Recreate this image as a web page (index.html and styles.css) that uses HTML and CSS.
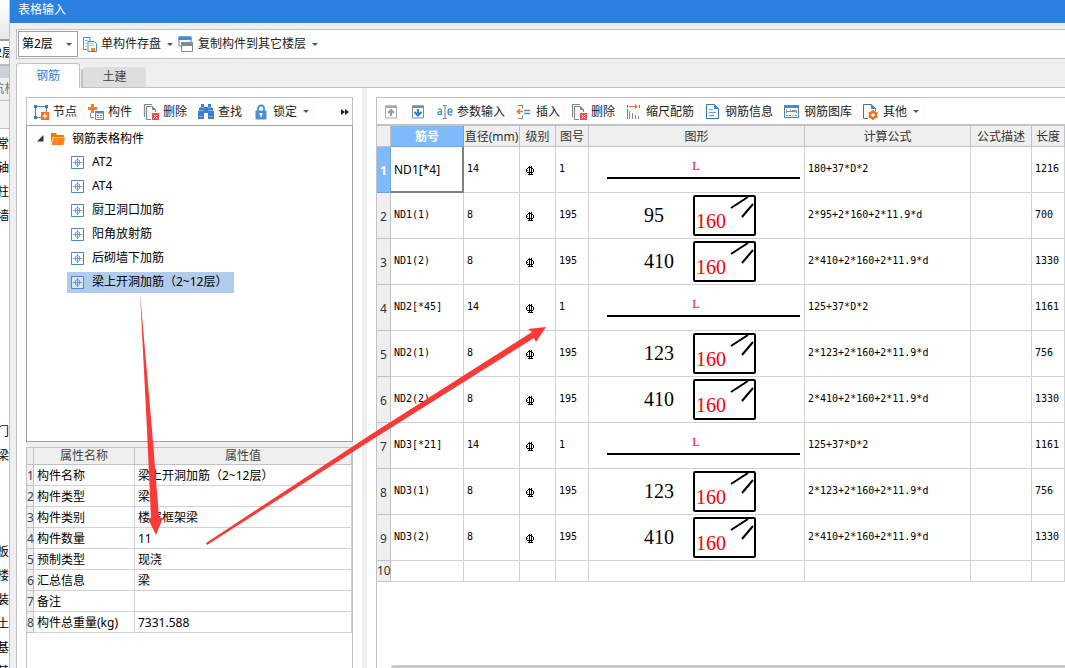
FILE: index.html
```html
<!DOCTYPE html>
<html lang="zh-CN">
<head>
<meta charset="utf-8">
<title>表格输入</title>
<link rel="stylesheet" href="styles.css">
</head>
<body>
<svg class="defs" aria-hidden="true">
  <symbol id="i-rebar" viewBox="0 0 10 11"><path d="M3 2.500h4M2 7.500h6M1.500 4v3M8.500 4v3M2 3.500h1M7 3.500h1M4.500 1v9M6.500 1v9M3 9.500h5M1.500 5.500h1" fill="none" stroke="#000" stroke-width="1"/></symbol>
  <symbol id="i-hooks" viewBox="0 0 59 37"><path d="M36 11L53 0M47 20L58 7" fill="none" stroke="#000" stroke-width="2"/></symbol>
  <symbol id="i-part" viewBox="0 0 13 13"><path d="M.5.5h12v12H.5z" fill="#fff" fill-opacity=".5" stroke="#3f8bdc"/><path d="M6.500 2v9M2 6.500h9M4.500 4.500l2-1 2 1M4.500 8.500l2 1 2-1M4.500 4.500v4M8.500 4.500v4" fill="none" stroke="#3f8bdc" stroke-width=".8"/></symbol>
  <symbol id="i-del" viewBox="0 0 16 16"><path d="M1.500 13V.5H9M3.500 15.500v-13H9l3.500 3.500v2M3.500 15.500H8" fill="none" stroke="#7d8b95" stroke-width="1.200"/><path d="M9 2v4h4z" fill="#7d8b95"/><path d="M9 9h7v7H9z" fill="#d9534f"/><path d="M10.500 10.500l4 4M14.500 10.500l-4 4" stroke="#fff"/></symbol>
</svg>

<aside class="strip">
  <div class="strip-top"></div>
  <div class="strip-field">2层</div>
  <div class="strip-bar"></div>
  <div class="strip-tab">杭构</div>
  <div class="strip-gap"></div>
  <ul class="strip-list">
    <li>常</li><li>轴</li><li>柱</li><li>墙</li>
    <li class="group-a">门</li><li>梁</li>
    <li class="group-b">板</li><li>楼</li><li>装</li><li>土</li><li>基</li><li>其</li>
  </ul>
</aside>

<main class="window">
  <header class="title">表格输入</header>

  <div class="topbar">
    <label class="floor"><select aria-label="楼层"><option>第2层</option></select><span class="caret"></span></label>
    <button class="topbtn">
      <svg width="14" height="15" viewBox="0 0 14 15"><path d="M4 12.500H.5V.5H7V4" fill="none" stroke="#3f8bdc"/><path d="M2.500 3.500h2M2.500 6.500h1M2.500 9.500h1" stroke="#3f8bdc"/><path d="M5 4.500h6l2.500 2v8H5z" fill="#fff" stroke="#3f8bdc"/><path d="M7 6.500h4M7 8.500h4" stroke="#9fc6ef"/><path d="M8 11h4v3H8z" fill="#f08a3c"/></svg>
      单构件存盘<span class="caret"></span>
    </button>
    <button class="topbtn">
      <svg width="16" height="16" viewBox="0 0 16 16"><path d="M1 1h12v9H1z" fill="#fff" stroke="#3f8bdc"/><path d="M.5.5h13V4H.5z" fill="#3f8bdc"/><path d="M3.500 6.500h11v9h-11z" fill="#fff" stroke="#7d8b95"/><path d="M3 6h12v4H3z" fill="#7d8b95"/></svg>
      复制构件到其它楼层<span class="caret"></span>
    </button>
  </div>

  <nav class="tabs">
    <button class="tab active">钢筋</button>
    <button class="tab">土建</button>
    <span class="tabline"></span>
  </nav>

  <div class="pane">
    <section class="left">
      <div class="tools">
        <button class="tool"><svg width="16" height="16" viewBox="0 0 16 16"><path d="M2.500 2.500h11v11h-11z" fill="none" stroke="#4a86b8"/><path d="M1 1h3v3H1zM12 1h3v3h-3zM1 12h3v3H1z" fill="#3479c8"/><path d="M8 8h8v8H8z" fill="#ee7420"/><path d="M12 9.500v5M9.500 12h5" stroke="#fff" stroke-width="1.200"/></svg>节点</button>
        <button class="tool"><svg width="16" height="16" viewBox="0 0 16 16"><path d="M3 0h3v3h3v3H6v3H3V6H0V3h3z" fill="#f08030"/><path d="M2.500 9v4.500H6" fill="none" stroke="#7d8b95"/><path d="M7.500 7.500h8v8h-8z" fill="#fff" stroke="#3f8bdc"/><path d="M7 7h9v2.500H7z" fill="#3f8bdc"/><path d="M9 11.500h2M12 11.500h2M9 13.500h2M12 13.500h2" stroke="#3f8bdc"/></svg>构件</button>
        <button class="tool"><svg width="16" height="16"><use href="#i-del"/></svg>删除</button>
        <button class="tool"><svg width="16" height="16" viewBox="0 0 16 16"><path d="M3 0h3v3h4V0h3v3l2 1v3h1v8h-6V9H6v6H0V7h1V4l2-1z" fill="#3a7fc8"/><path d="M1 6.500h5M10 6.500h5M1 12.500h4M11 12.500h4M3 3.500h3M10 3.500h3" stroke="#8fc0f0" stroke-width=".8"/></svg>查找</button>
        <button class="tool"><svg width="16" height="16" viewBox="0 0 16 16"><path d="M5 8V4.500a3 3 0 0 1 6 0V8" fill="none" stroke="#4a90d9" stroke-width="1.800"/><rect x="2.500" y="6.500" width="11" height="9" rx="1" fill="#4a90d9"/><path d="M8 9v4M6.500 10h3" stroke="#fff" stroke-width="1.500"/></svg>锁定<span class="caret"></span></button>
        <button class="more" aria-label="更多"><svg width="8" height="6" viewBox="0 0 8 6"><path d="M0 0l4 3-4 3zM4 0l4 3-4 3z" fill="#222"/></svg></button>
      </div>
      <div class="tree">
        <div class="root">
          <svg width="7" height="7" viewBox="0 0 7 7"><path d="M6.500 0v6.500H0z" fill="#333"/></svg>
          <svg width="14" height="12" viewBox="0 0 14 12"><path d="M0 11V0h5l1 2h7v2H2z" fill="#f47a00"/><path d="M2.500 4.500H14L12.500 12H.5z" fill="#ff8410"/></svg>
          钢筋表格构件
        </div>
        <ul>
          <li><span class="node"><svg width="13" height="13"><use href="#i-part"/></svg>AT2</span></li>
          <li><span class="node"><svg width="13" height="13"><use href="#i-part"/></svg>AT4</span></li>
          <li><span class="node"><svg width="13" height="13"><use href="#i-part"/></svg>厨卫洞口加筋</span></li>
          <li><span class="node"><svg width="13" height="13"><use href="#i-part"/></svg>阳角放射筋</span></li>
          <li><span class="node"><svg width="13" height="13"><use href="#i-part"/></svg>后砌墙下加筋</span></li>
          <li><span class="node selected"><svg width="13" height="13"><use href="#i-part"/></svg>梁上开洞加筋（2~12层）</span></li>
        </ul>
      </div>
      <div class="divider"></div>
      <div class="props">
        <table>
          <colgroup><col class="p-num"><col class="p-name"><col></colgroup>
          <thead><tr><th></th><th>属性名称</th><th>属性值</th></tr></thead>
          <tbody>
            <tr><th>1</th><td>构件名称</td><td>梁上开洞加筋（2~12层）</td></tr>
            <tr><th>2</th><td>构件类型</td><td>梁</td></tr>
            <tr><th>3</th><td>构件类别</td><td>楼层框架梁</td></tr>
            <tr><th>4</th><td>构件数量</td><td>11</td></tr>
            <tr><th>5</th><td>预制类型</td><td>现浇</td></tr>
            <tr><th>6</th><td>汇总信息</td><td>梁</td></tr>
            <tr><th>7</th><td>备注</td><td></td></tr>
            <tr><th>8</th><td>构件总重量(kg)</td><td>7331.588</td></tr>
          </tbody>
        </table>
      </div>
    </section>

    <div class="splitter"></div>

    <section class="right">
      <div class="tools">
        <button class="tool" aria-label="上移"><svg width="16" height="16" viewBox="0 0 16 16"><path d="M2.500 2h11v12h-11z" fill="#fff" stroke="#a8a8a8"/><path d="M2 1.500h12V4H2z" fill="#a8a8a8"/><path d="M8 12V6M5 9l3-3 3 3" fill="none" stroke="#999" stroke-width="2"/></svg></button>
        <button class="tool" aria-label="下移"><svg width="16" height="16" viewBox="0 0 16 16"><path d="M2.500 2h11v12h-11z" fill="#fff" stroke="#7d8b95"/><path d="M2 1.500h12V4H2z" fill="#7d8b95"/><path d="M8 5v6M4.500 8L8 11.500 11.500 8" fill="none" stroke="#2f7fd6" stroke-width="2.200"/></svg></button>
        <button class="tool"><svg width="16" height="16" viewBox="0 0 16 16"><path d="M1 5.500q3-1.500 3.500 1V11M4.500 7.500Q.5 7.500.8 9.500 1.500 11.500 4.500 9.500M11 8h4q0-3-2-3t-2 3 2 3q1.500 0 2-1" fill="none" stroke="#4a90d9" stroke-width="1.300"/><path d="M6 1.500h1.500l.5.500.5-.5H10M8 2v12M6 14.500h1.500l.5-.5.5.5H10" fill="none" stroke="#777"/></svg>参数输入</button>
        <button class="tool"><svg width="16" height="16" viewBox="0 0 16 16"><path d="M2 1.500h4.500v3M6.500 11v3.500H2" fill="none" stroke="#7d8b95"/><path d="M7 7.500H2M4 5L1.500 7.500 4 10" fill="none" stroke="#f07820" stroke-width="1.600"/><path d="M8 6.500h6M8 9.500h6" stroke="#4a90d9" stroke-width="1.300"/></svg>插入</button>
        <button class="tool"><svg width="16" height="16"><use href="#i-del"/></svg>删除</button>
        <button class="tool"><svg width="16" height="16" viewBox="0 0 16 16"><path d="M1.500 1v3M1.500 5v10" stroke="#3f8bdc"/><path d="M3 2.500h8" stroke="#f07820"/><path d="M9 0l3 2.500L9 5z" fill="#f07820"/><path d="M13.500 1v3" stroke="#3f8bdc"/><path d="M3.500 7v8M6.500 9v6M9.500 11v4M12.500 12v3" stroke="#7d8b95"/></svg>缩尺配筋</button>
        <button class="tool"><svg width="16" height="16" viewBox="0 0 16 16"><path d="M1.500.5h8l4 4v10h-12z" fill="#fff" stroke="#3479c8"/><path d="M9 0l5 5H9z" fill="#3f8bdc"/><path d="M4 5.500h4M4 8.500h7M4 11.500h5" stroke="#6b9ccc"/></svg>钢筋信息</button>
        <button class="tool"><svg width="16" height="16" viewBox="0 0 16 16"><path d="M.5 2.500h14v11H.5z" fill="#fff" stroke="#4a80b0"/><path d="M0 1h15v3H0z" fill="#3f8bdc"/><path d="M2.500 5.500v3.500M2.500 7.500h9M6.500 5.500v2M12.500 9V6.500H8" fill="none" stroke="#7d8b95"/><path d="M2 11.500h2" stroke="#7d8b95"/><path d="M5 11.500h2" stroke="#f07820"/><path d="M8 11.500h2" stroke="#e8b040"/><path d="M11 11.500h2" stroke="#50b060"/></svg>钢筋图库</button>
        <button class="tool"><svg width="16" height="16" viewBox="0 0 16 16"><path d="M5 14.500H.5V.5h8l4 4V7" fill="#fff" stroke="#3479c8"/><path d="M8 0l5 5H8z" fill="#3f8bdc"/><circle cx="10" cy="11" r="3" fill="#fff" stroke="#ee7420" stroke-width="2.400"/><path d="M10 6v2M10 14v2M5.500 8.500l2 1M14.500 8.500l-2 1M5.500 13.500l2-1M14.500 13.500l-2-1" stroke="#ee7420" stroke-width="1.600"/></svg>其他<span class="caret"></span></button>
      </div>
      <div class="grid">
        <table>
          <colgroup><col class="c-num"><col class="c-id"><col class="c-dia"><col class="c-grade"><col class="c-fig"><col class="c-shape"><col class="c-formula"><col class="c-desc"><col></colgroup>
          <thead><tr><th></th><th class="on">筋号</th><th>直径(mm)</th><th>级别</th><th>图号</th><th>图形</th><th>计算公式</th><th>公式描述</th><th>长度</th></tr></thead>
          <tbody>
            <tr><th class="on">1</th><td class="editing"><input aria-label="筋号" value="ND1[*4]"></td><td>14</td><td><svg class="rebar"><use href="#i-rebar"/></svg></td><td>1</td><td><div class="bar">L</div></td><td>180+37*D*2</td><td></td><td>1216</td></tr>
            <tr><th>2</th><td>ND1(1)</td><td>8</td><td><svg class="rebar"><use href="#i-rebar"/></svg></td><td>195</td><td><div class="hoop"><span>95</span><b>160<svg><use href="#i-hooks"/></svg></b></div></td><td>2*95+2*160+2*11.9*d</td><td></td><td>700</td></tr>
            <tr><th>3</th><td>ND1(2)</td><td>8</td><td><svg class="rebar"><use href="#i-rebar"/></svg></td><td>195</td><td><div class="hoop"><span>410</span><b>160<svg><use href="#i-hooks"/></svg></b></div></td><td>2*410+2*160+2*11.9*d</td><td></td><td>1330</td></tr>
            <tr><th>4</th><td>ND2[*45]</td><td>14</td><td><svg class="rebar"><use href="#i-rebar"/></svg></td><td>1</td><td><div class="bar">L</div></td><td>125+37*D*2</td><td></td><td>1161</td></tr>
            <tr><th>5</th><td>ND2(1)</td><td>8</td><td><svg class="rebar"><use href="#i-rebar"/></svg></td><td>195</td><td><div class="hoop"><span>123</span><b>160<svg><use href="#i-hooks"/></svg></b></div></td><td>2*123+2*160+2*11.9*d</td><td></td><td>756</td></tr>
            <tr><th>6</th><td>ND2(2)</td><td>8</td><td><svg class="rebar"><use href="#i-rebar"/></svg></td><td>195</td><td><div class="hoop"><span>410</span><b>160<svg><use href="#i-hooks"/></svg></b></div></td><td>2*410+2*160+2*11.9*d</td><td></td><td>1330</td></tr>
            <tr><th>7</th><td>ND3[*21]</td><td>14</td><td><svg class="rebar"><use href="#i-rebar"/></svg></td><td>1</td><td><div class="bar">L</div></td><td>125+37*D*2</td><td></td><td>1161</td></tr>
            <tr><th>8</th><td>ND3(1)</td><td>8</td><td><svg class="rebar"><use href="#i-rebar"/></svg></td><td>195</td><td><div class="hoop"><span>123</span><b>160<svg><use href="#i-hooks"/></svg></b></div></td><td>2*123+2*160+2*11.9*d</td><td></td><td>756</td></tr>
            <tr><th>9</th><td>ND3(2)</td><td>8</td><td><svg class="rebar"><use href="#i-rebar"/></svg></td><td>195</td><td><div class="hoop"><span>410</span><b>160<svg><use href="#i-hooks"/></svg></b></div></td><td>2*410+2*160+2*11.9*d</td><td></td><td>1330</td></tr>
            <tr class="blank"><th>10</th><td></td><td></td><td></td><td></td><td></td><td></td><td></td><td></td></tr>
          </tbody>
        </table>
        <div class="scrollbar"></div>
      </div>
    </section>
  </div>
</main>

<svg class="notes" width="1065" height="668" viewBox="0 0 1065 668" aria-hidden="true">
  <path d="M140 293L152 430 159 517 163 518 156 535 148 519 151 518 147 430zM206 543L370 435 532 332 528 329 546 327 536 342 534 338 370 441 207 545z" fill="#fa3a38"/>
</svg>
</body>
</html>
```

FILE: styles.css
```css
* { box-sizing: border-box; }

body {
  margin: 0;
  height: 100vh;
  display: flex;
  overflow: hidden;
  background: #efefef;
  color: #000;
  font: 12px/16px "Noto Sans", "Noto Sans CJK SC", sans-serif;
}

button, select, input { font: inherit; color: inherit; }
button { border: 0; background: none; padding: 0; }
ul { list-style: none; margin: 0; padding: 0; }
svg { flex: none; }
.defs { position: absolute; width: 0; height: 0; }

/* Slice of the window behind */
.strip {
  width: 9px;
  flex: none;
  overflow: hidden;
  background: #fff;
  display: flex;
  flex-direction: column;
}
.strip > div, .strip li {
  display: flex;
  align-items: center;
  justify-content: flex-end;
  flex: none;
  white-space: nowrap;
}
.strip-top { height: 41px; background: linear-gradient(#fff, #e4e9ec); border-bottom: 2px solid #9a9fa5; }
.strip > .strip-field { height: 25px; border-bottom: 2px solid #b8bcc2; justify-content: center; }
.strip-bar { height: 12px; background: #cfd1d8; }
.strip > .strip-tab { height: 23px; background: #efefef; color: #777; border-bottom: 1px solid #bfc1c5; justify-content: center; }
.strip-gap { height: 28px; background: #f2f2f2; border-bottom: 1px solid #bfc1c5; }
.strip-list { padding-top: 3px; }
.strip-list li { height: 24px; }
.strip-list .group-a { margin-top: 192px; }
.strip-list .group-b { margin-top: 72px; }

.window {
  flex: 1;
  min-width: 0;
  display: flex;
  flex-direction: column;
  border-left: 1px solid #b9c3d0;
}
.title {
  height: 23px;
  padding: 2px 8px;
  background: #2b80e2;
  color: #fff;
  flex: none;
}

.caret {
  border: 3px solid transparent;
  border-top-color: #555;
  border-bottom: 0;
}

.topbar {
  height: 30px;
  margin: 6px 0 4px 6px;
  padding-left: 1px;
  display: flex;
  align-items: center;
  gap: 5px;
  background: #fff;
  border: 1px solid #c0c2c7;
  border-right: 0;
  flex: none;
}
.floor { display: flex; align-items: center; position: relative; }
.floor select {
  width: 60px;
  height: 26px;
  appearance: none;
  border: 1px solid #a0a0a0;
  border-radius: 0;
  background: #fff;
  padding: 0 3px;
}
.floor .caret { position: absolute; right: 6px; }
.topbtn { display: flex; align-items: center; gap: 4px; color: #222; }
.topbtn .caret { margin-left: 2px; }

.tabs { display: flex; align-items: flex-end; height: 25px; margin-left: 6px; flex: none; }
.tab {
  width: 63px;
  height: 21px;
  margin-left: 3px;
  background: #dedede;
  border-radius: 3px 3px 0 0;
  color: #444;
}
.tab.active {
  width: 64px;
  height: 25px;
  margin: 0;
  background: #fff;
  color: #2b80e2;
  border: 1px solid #c0c2c7;
  border-bottom: 0;
}
.tab:not(.active) { border-bottom: 1px solid #c0c2c7; }
.tabline { flex: 1; border-bottom: 1px solid #c0c2c7; }
.tab.active + .tab { box-shadow: -3px 1px 0 -1px #c0c2c7; clip-path: inset(0 0 0 -3px); }

.pane {
  flex: 1;
  min-height: 0;
  margin-left: 6px;
  padding-left: 9px;
  display: flex;
  background: #fff;
  border-left: 1px solid #c0c2c7;
}
.left { width: 327px; padding-top: 9px; flex: none; display: flex; flex-direction: column; }
.splitter { width: 5px; margin: 0 9px; background: #efefef; flex: none; }
.right { flex: 1; min-width: 0; padding-top: 9px; display: flex; flex-direction: column; }

.tools {
  height: 28px;
  padding: 0 2px;
  display: flex;
  align-items: center;
  gap: 3px;
  border: 1px solid #c0c2c7;
  border-bottom: 0;
  flex: none;
  overflow: hidden;
}
.left .more { margin-right: 1px; }
.right .tools { height: 29px; padding-top: 1px; border-right: 0; border-bottom: 2px solid #c0c4c8; }
.tool {
  display: flex;
  align-items: center;
  gap: 4px;
  padding: 3px 4px;
  color: #222;
  white-space: nowrap;
  box-shadow: 0 0 0 1px #fafafa;
}
.tool .caret { margin-left: 2px; }
.more { margin-left: auto; display: flex; }

.tree { height: 317px; border: 1px solid #a2a2a2; padding-top: 1px; flex: none; }
.root { height: 23px; padding-left: 10px; display: flex; align-items: center; gap: 7px; }
.tree li { height: 24px; padding-left: 40px; display: flex; align-items: center; }
.node { height: 21px; padding: 0 7px 0 4px; display: flex; align-items: center; gap: 8px; }
.node.selected { background: #b1cbec; }

.divider { height: 5px; background: #efefef; flex: none; }
.props { flex: 1; border: 1px solid #c0c2c7; border-bottom: 0; }

table { width: 100%; table-layout: fixed; border-collapse: separate; border-spacing: 0; }
th, td {
  padding: 0;
  font-weight: normal;
  text-align: left;
  white-space: nowrap;
  border: solid #d2d2d2;
  border-width: 0 1px 1px 0;
}
th { background: #efefef; color: #444; text-align: center; border-color: #c0c2c7; }

.props th { height: 17px; }
.props tbody th, .props td { height: 21px; padding-top: 2px; }
.props td { padding-left: 3px; }
.p-num { width: 7px; }
.p-name { width: 101px; }

.grid { flex: 1; min-height: 0; border-left: 1px solid #c0c2c7; display: flex; flex-direction: column; }
.grid th { height: 21px; color: #333; }
.grid thead th, .grid tbody th { padding-top: 2px; }
.grid td { height: 46px; padding: 0 0 1px 3px; font: 10px/14px "DejaVu Sans Mono", monospace; }
.grid .on { background: #7fbafa; color: #fff; border-color: #6aa6e8; font-weight: bold; }
.grid .blank td, .grid .blank th { height: 21px; padding: 0; }
.c-num { width: 14px; }
.c-id { width: 73px; }
.c-dia { width: 56px; }
.c-grade { width: 36px; }
.c-fig { width: 33px; }
.c-shape { width: 216px; }
.c-formula { width: 166px; }
.c-desc { width: 61px; }

.grid .editing { padding: 0; border: solid #808080; border-width: 0 2px 2px 0; }
.editing input {
  display: block;
  width: 100%;
  height: 44px;
  padding: 0 3px;
  border: 0;
  outline: 0;
  background: #fff;
  font: 12px/16px "Noto Sans", sans-serif;
}
.rebar { display: block; width: 10px; height: 11px; margin: 2px 0 0 2px; }
.bar {
  margin: 0 4px 0 15px;
  padding: 0 15px 4px 0;
  border-bottom: 2px solid #000;
  color: #f00;
  font: 12px/14px "Liberation Serif", serif;
  text-align: center;
}
.hoop {
  display: flex;
  align-items: center;
  padding-left: 52px;
  font: 20px/24px "Liberation Serif", serif;
}
.hoop span { width: 49px; }
.hoop b {
  position: relative;
  width: 63px;
  height: 41px;
  padding: 12px 0 0 1px;
  border: 2px solid #000;
  border-radius: 2px;
  color: #f00;
  font-weight: normal;
}
.hoop b svg { position: absolute; inset: 0; width: 59px; height: 37px; }

.scrollbar { height: 3px; margin: auto 0 0 14px; background: #c9c9c9; border-radius: 3px 0 0 0; flex: none; }

.notes { position: absolute; left: 0; top: 0; pointer-events: none; }
```
